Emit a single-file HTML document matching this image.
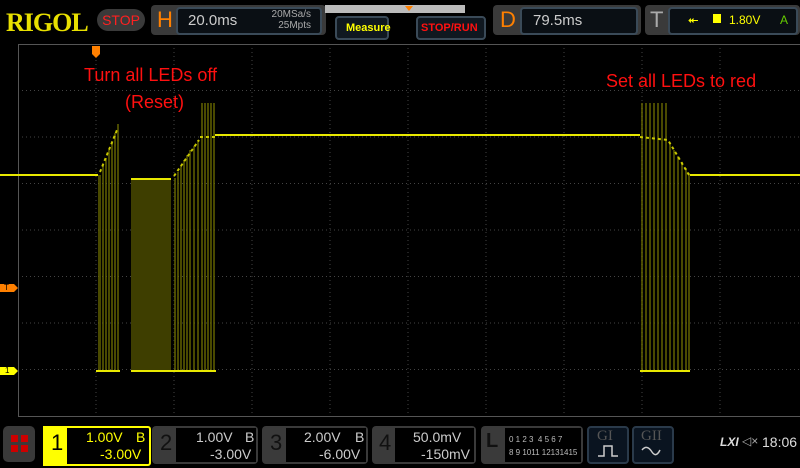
<!DOCTYPE html>
<html><head><style>
body{margin:0;width:800px;height:468px;background:#000;overflow:hidden;font-family:"Liberation Sans",sans-serif;position:relative}
.a{position:absolute}
.box{position:absolute;border:2px solid #3a4a58;border-radius:4px;background:#050a10}
</style></head><body>
<div class="a" style="left:6px;top:8px;font:bold 26px 'Liberation Serif',serif;color:#e8e000;letter-spacing:-1px">RIGOL</div>
<div class="a" style="left:97px;top:9px;width:48px;height:22px;border-radius:11px;background:#3a3a3a;color:#ff2020;font-size:14px;text-align:center;line-height:22px">STOP</div>
<div class="a" style="left:151px;top:5px;width:175px;height:30px;background:#3a3a3a;border-radius:4px"></div>
<div class="a" style="left:157px;top:7px;font-size:22px;color:#ff8000">H</div>
<div class="box" style="left:176px;top:7px;width:142px;height:24px;background:#0a0f14"></div>
<div class="a" style="left:188px;top:12px;font-size:15px;color:#ccc">20.0ms</div>
<div class="a" style="left:255px;top:9px;font-size:10px;color:#aaa;text-align:right;line-height:11px;width:56px">20MSa/s<br>25Mpts</div>
<div class="a" style="left:325px;top:5px;width:140px;height:8px;background:#bbb"></div>
<div class="a" style="left:405px;top:6px;width:0;height:0;border-left:4px solid transparent;border-right:4px solid transparent;border-top:5px solid #ff8000"></div>
<div class="box" style="left:335px;top:16px;width:50px;height:20px;background:#101820"></div>
<div class="a" style="left:346px;top:22px;font-size:11px;font-weight:bold;color:#ffff00">Measure</div>
<div class="box" style="left:416px;top:16px;width:66px;height:20px;background:#101820"></div>
<div class="a" style="left:421px;top:22px;font-size:11px;font-weight:bold;color:#ff1010">STOP/RUN</div>
<div class="a" style="left:493px;top:5px;width:148px;height:30px;background:#3a3a3a;border-radius:4px"></div>
<div class="a" style="left:500px;top:7px;font-size:22px;color:#ff8000">D</div>
<div class="box" style="left:520px;top:7px;width:114px;height:24px;background:#0a0f14"></div>
<div class="a" style="left:533px;top:12px;font-size:15px;color:#ccc">79.5ms</div>
<div class="a" style="left:645px;top:5px;width:155px;height:30px;background:#3a3a3a;border-radius:4px"></div>
<div class="a" style="left:650px;top:7px;font-size:22px;color:#aaa">T</div>
<div class="box" style="left:668px;top:7px;width:126px;height:24px;background:#0a0f14"></div>
<div class="a" style="left:688px;top:12px;font-size:13px;color:#ff0">⯬</div>
<div class="a" style="left:713px;top:14px;width:8px;height:9px;background:#ff0"></div>
<div class="a" style="left:729px;top:13px;font-size:12px;color:#ff0">1.80V</div>
<div class="a" style="left:780px;top:13px;font-size:12px;color:#6c0">A</div>

<svg class="a" style="left:0;top:0" width="800" height="468">
<g stroke="#444" stroke-width="1" stroke-dasharray="1,3">
<line x1="18" y1="90.5" x2="800" y2="90.5"/><line x1="18" y1="137" x2="800" y2="137"/><line x1="18" y1="183.5" x2="800" y2="183.5"/><line x1="18" y1="230" x2="800" y2="230"/><line x1="18" y1="276.5" x2="800" y2="276.5"/><line x1="18" y1="323" x2="800" y2="323"/><line x1="18" y1="369.5" x2="800" y2="369.5"/>
<line x1="96" y1="44" x2="96" y2="416"/><line x1="174" y1="44" x2="174" y2="416"/><line x1="252" y1="44" x2="252" y2="416"/><line x1="330" y1="44" x2="330" y2="416"/><line x1="408" y1="44" x2="408" y2="416"/><line x1="486" y1="44" x2="486" y2="416"/><line x1="564" y1="44" x2="564" y2="416"/><line x1="642" y1="44" x2="642" y2="416"/><line x1="720" y1="44" x2="720" y2="416"/>
</g>
<rect x="18.5" y="44.5" width="790" height="372" fill="none" stroke="#555"/>
<g fill="#6a6a00" opacity="0.7">
<rect x="98" y="175" width="3" height="196"/><rect x="102" y="165" width="2" height="206"/><rect x="105" y="158" width="2" height="213"/><rect x="108" y="150" width="2" height="221"/><rect x="111" y="143" width="2" height="228"/><rect x="114" y="133" width="2" height="238"/><rect x="117" y="124" width="2" height="247"/>
<rect x="174" y="178" width="2" height="193"/><rect x="177" y="172" width="2" height="199"/><rect x="180" y="166" width="2" height="205"/><rect x="183" y="160" width="2" height="211"/><rect x="186" y="155" width="2" height="216"/><rect x="189" y="150" width="2" height="221"/><rect x="193" y="146" width="2" height="225"/><rect x="197" y="140" width="2" height="231"/>
<rect x="201" y="103" width="2" height="268"/><rect x="204" y="103" width="2" height="268"/><rect x="207" y="103" width="2" height="268"/><rect x="210" y="103" width="2" height="268"/><rect x="213" y="103" width="2" height="268"/>
<rect x="641" y="103" width="2" height="268"/><rect x="645" y="103" width="2" height="268"/><rect x="649" y="103" width="2" height="268"/><rect x="653" y="103" width="2" height="268"/><rect x="657" y="103" width="2" height="268"/><rect x="661" y="103" width="2" height="268"/><rect x="665" y="103" width="2" height="268"/>
<rect x="669" y="143" width="2" height="228"/><rect x="673" y="150" width="2" height="221"/><rect x="677" y="156" width="2" height="215"/><rect x="681" y="162" width="2" height="209"/><rect x="685" y="168" width="2" height="203"/><rect x="688" y="173" width="2" height="198"/>
</g>
<rect x="131" y="178" width="40" height="193" fill="#3e3e00"/>
<g stroke="#e8e800" stroke-width="2" fill="none">
<path d="M0 175H98 M131 179H171 M215 135H640 M690 175H800"/>
<path d="M96 371H120 M131 371H216 M640 371H690"/>
</g>
<g stroke="#c8c800" stroke-width="2" fill="none" stroke-dasharray="3,3">
<path d="M100 172L117 130 M174 176L199 140 M200 137H215 M640 137L668 140L689 175"/>
</g>
<polygon points="0,284 14,284 18,288 14,292 0,292" fill="#ff8000"/>
<polygon points="0,367 14,367 18,371 14,375 0,375" fill="#ffff00"/>
<polygon points="92,46 100,46 100,54 96,58 92,54" fill="#ff8000"/>
</svg>
<div class="a" style="left:4px;top:283px;font-size:8px;color:#000">T</div>
<div class="a" style="left:5px;top:366px;font-size:8px;color:#000">1</div>
<div class="a" style="left:84px;top:65px;font-size:18px;color:#ff1010">Turn all LEDs off</div>
<div class="a" style="left:125px;top:92px;font-size:18px;color:#ff1010">(Reset)</div>
<div class="a" style="left:606px;top:71px;font-size:18px;color:#ff1010">Set all LEDs to red</div>

<div class="a" style="left:3px;top:426px;width:32px;height:36px;background:#3a3a3a;border-radius:5px"></div>
<div class="a" style="left:11px;top:435px;width:7px;height:7px;background:#c00;box-shadow:10px 0 #c00,0 10px #c00,10px 10px #c00"></div>
<div class="a" style="left:43px;top:426px;width:104px;height:36px;border:2px solid #ff0;background:#000;border-radius:3px"></div>
<div class="a" style="left:43px;top:426px;width:24px;height:40px;background:#ff0"></div>
<div class="a" style="left:51px;top:430px;font-size:22px;color:#000">1</div>
<div class="a" style="left:86px;top:429px;font-size:14px;color:#ff0">1.00V</div><div class="a" style="left:136px;top:429px;font-size:14px;color:#ff0">B</div>
<div class="a" style="left:100px;top:446px;font-size:14px;color:#ff0">-3.00V</div>
<div class="a" style="left:152px;top:426px;width:106px;height:38px;background:#3a3a3a;border-radius:4px"></div>
<div class="a" style="left:160px;top:430px;font-size:22px;color:#111">2</div>
<div class="a" style="left:176px;top:428px;width:80px;height:34px;background:#000"></div>
<div class="a" style="left:196px;top:429px;font-size:14px;color:#ccc">1.00V</div><div class="a" style="left:245px;top:429px;font-size:14px;color:#ccc">B</div>
<div class="a" style="left:210px;top:446px;font-size:14px;color:#ccc">-3.00V</div>
<div class="a" style="left:262px;top:426px;width:106px;height:38px;background:#3a3a3a;border-radius:4px"></div>
<div class="a" style="left:270px;top:430px;font-size:22px;color:#111">3</div>
<div class="a" style="left:286px;top:428px;width:80px;height:34px;background:#000"></div>
<div class="a" style="left:304px;top:429px;font-size:14px;color:#ccc">2.00V</div><div class="a" style="left:355px;top:429px;font-size:14px;color:#ccc">B</div>
<div class="a" style="left:319px;top:446px;font-size:14px;color:#ccc">-6.00V</div>
<div class="a" style="left:372px;top:426px;width:104px;height:38px;background:#3a3a3a;border-radius:4px"></div>
<div class="a" style="left:379px;top:430px;font-size:22px;color:#111">4</div>
<div class="a" style="left:395px;top:428px;width:79px;height:34px;background:#000"></div>
<div class="a" style="left:413px;top:429px;font-size:14px;color:#ccc">50.0mV</div>
<div class="a" style="left:421px;top:446px;font-size:14px;color:#ccc">-150mV</div>
<div class="a" style="left:481px;top:426px;width:102px;height:38px;background:#3a3a3a;border-radius:4px"></div>
<div class="a" style="left:486px;top:430px;font-size:20px;color:#111;font-weight:bold">L</div>
<div class="a" style="left:505px;top:428px;width:76px;height:34px;background:#000"></div>
<div class="a" style="left:509px;top:433px;font-size:8px;color:#bbb;line-height:13px">0 1 2 3 &nbsp;4 5 6 7<br>8 9 1011 12131415</div>
<div class="box" style="left:587px;top:426px;width:38px;height:34px;background:#0a1420;border-color:#2a3a4a"></div>
<div class="a" style="left:597px;top:428px;font:15px 'Liberation Serif',serif;color:#555">GI</div>
<div class="box" style="left:632px;top:426px;width:38px;height:34px;background:#0a1420;border-color:#2a3a4a"></div>
<div class="a" style="left:641px;top:428px;font:15px 'Liberation Serif',serif;color:#555">GII</div>
<svg class="a" style="left:590px;top:440px" width="90" height="20"><path d="M8 16H14V6H22V16H28" stroke="#ccc" fill="none" stroke-width="1.5"/><path d="M52 10Q57 4 62 12Q66 18 70 10" stroke="#ccc" fill="none" stroke-width="1.5"/></svg>
<div class="a" style="left:720px;top:435px;font-size:12px;font-weight:bold;font-style:italic;color:#ddd">LXI</div>
<div class="a" style="left:742px;top:434px;font-size:12px;color:#aaa">◁×</div>
<div class="a" style="left:762px;top:434px;font-size:14px;color:#ddd">18:06</div>
</body></html>
